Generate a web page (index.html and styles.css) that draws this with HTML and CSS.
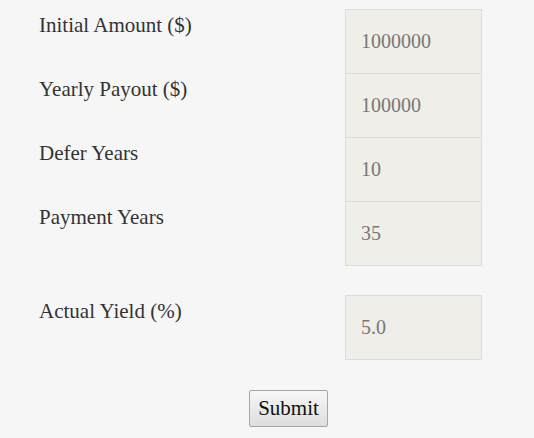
FILE: index.html
```html
<!DOCTYPE html>
<html>
<head>
<meta charset="utf-8">
<link rel="stylesheet" href="styles.css">
</head>
<body>
<form class="form">
  <div class="group">
    <div class="row"><label class="label">Initial Amount ($)</label><input class="field" type="text" value="1000000"></div>
    <div class="row"><label class="label">Yearly Payout ($)</label><input class="field" type="text" value="100000"></div>
    <div class="row"><label class="label">Defer Years</label><input class="field" type="text" value="10"></div>
    <div class="row"><label class="label">Payment Years</label><input class="field" type="text" value="35"></div>
  </div>
  <div class="group group-second">
    <div class="row"><label class="label">Actual Yield (%)</label><input class="field" type="text" value="5.0"></div>
  </div>
  <div class="actions">
    <button class="submit" type="button">Submit</button>
  </div>
</form>
</body>
</html>
```
FILE: styles.css
```css
html, body {
  margin: 0;
  padding: 0;
  background: #f6f6f6;
}
body {
  font-family: "Liberation Serif", "Times New Roman", serif;
  color: #333;
}
.form {
  padding: 9px 0 0 39px;
}
.group {
  display: flex;
  flex-direction: column;
}
.group-second {
  margin-top: 29px;
}
.row {
  display: flex;
  align-items: flex-start;
}
.row + .row {
  margin-top: -1px;
}
.label {
  width: 306px;
  padding-top: 4px;
  font-size: 21px;
  line-height: 24px;
  color: #333;
}
.field {
  box-sizing: border-box;
  width: 137px;
  height: 65px;
  margin: 0;
  padding: 0 0 0 15px;
  border: 1px solid #dcdcdc;
  border-radius: 0;
  background: #efeee9;
  font-family: "Liberation Serif", "Times New Roman", serif;
  font-size: 20px;
  color: #777;
  outline: none;
}
.actions {
  display: flex;
  justify-content: center;
  margin-top: 30px;
  padding-left: 4px;
}
.submit {
  box-sizing: border-box;
  height: 37px;
  padding: 0 8px;
  border: 1px solid #a6a6a6;
  border-radius: 2px;
  background: linear-gradient(#f7f7f7, #dedede);
  font-family: "Liberation Serif", "Times New Roman", serif;
  font-size: 21px;
  color: #111;
}
```
